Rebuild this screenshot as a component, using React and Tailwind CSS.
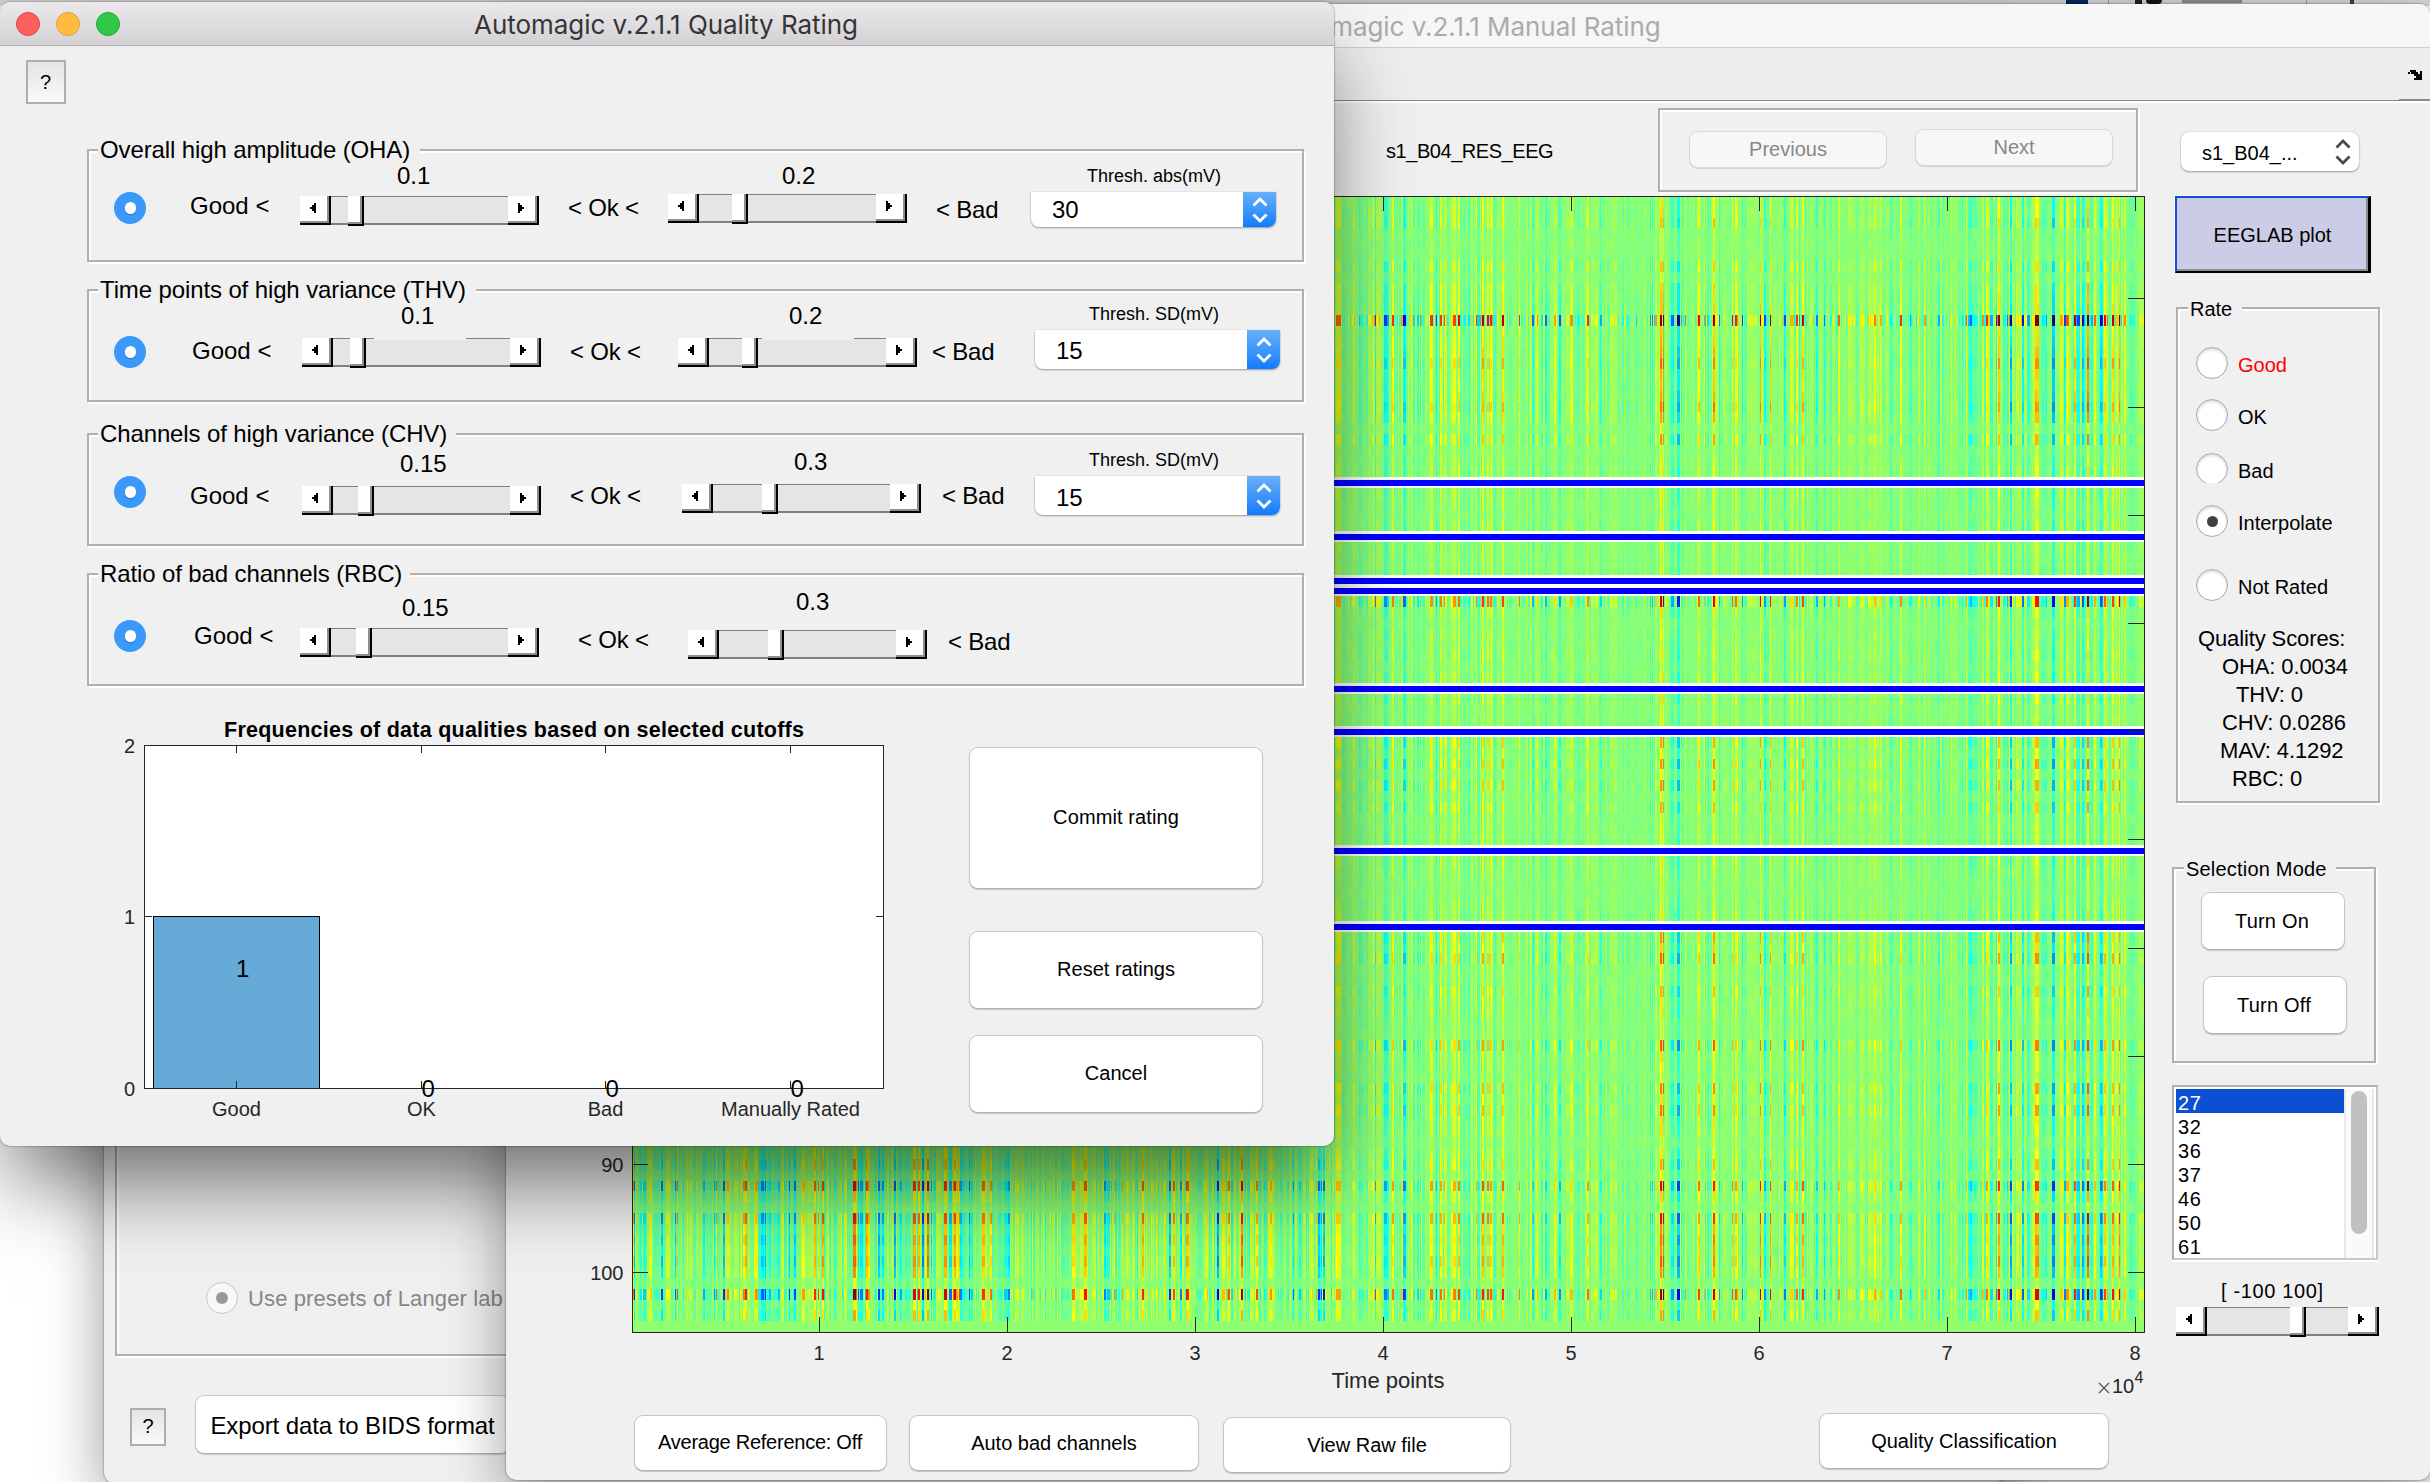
import React from "react";

/* ---------- heat map data ---------- */

const MAP = { left: 633, right: 2144, top: 196, bottom: 1332 };
const ROWS = 105;
const ROW_H = (MAP.bottom - MAP.top) / ROWS;

// Relative signal strength of each channel.
const STRENGTH = [
  0.25, 0.25, 0.34, 0.08, 0.07, 0.06, 0.32, 0.1, 0.3, 0.3, 0.34, 1.25, 0.32, 0.34, 0.4, 0.52, 0.36, 0.34, 0.4, 0.52,
  0.38, 0.1, 0.42, 0.08, 0.16, 0.22, 0, 0.2, 0.14, 0.07, 0.2, 0, 0.14, 0.1, 0.12, 0, 0, 0.9, 0.22, 0.08,
  0.15, 0.14, 0.22, 0.1, 0.22, 0, 0.22, 0.08, 0.12, 0, 0.42, 0.18, 0.45, 0.16, 0.45, 0.12, 0.34, 0.12, 0.14, 0.16,
  0, 0.2, 0.14, 0.07, 0.07, 0.12, 0.2, 0, 0.42, 0.3, 0.52, 0.15, 0.13, 0.36, 0.2, 0.2, 0.1, 0.1, 0.58, 0.22,
  0.18, 0.12, 0.48, 0.26, 0.48, 0.26, 0.24, 0.1, 0.22, 0.4, 0.16, 0.82, 0.3, 0.1, 0.76, 0.4, 0.52, 0.42, 0.55, 0.42,
  0.09, 1, 0.22, 0.38, 0,
];
const BAD = [27, 32, 36, 37, 46, 50, 61, 68];

// Bursts that stand out of the background: [position, value, width class].
const BURSTS = [
  [723, -0.8, 1], [727, 0.5, 1], [745, 0.8, 1], [853, 1.1, 2], [866, 0.8, 1], [878, -0.8, 1],
  [913, 0.9, 2], [918, 0.8, 1], [922, -1, 1], [927, 1.1, 1], [944, 0.9, 2], [954, 0.9, 1], [960, -0.6, 1], [990, 0.6, 1],
  [1008, -0.6, 1], [1084, 0.8, 2], [1104, -0.6, 1], [1142, 0.8, 1], [1169, -0.8, 1], [1173, 0.7, 1], [1180, -0.6, 1], [1217, -1, 1],
  [1228, 0.7, 1], [1241, 1.1, 1], [1318, -0.8, 1], [1323, -0.8, 1], [1338, 0.5, 2], [1392, 0.6, 1], [1430, 0.6, 2], [1440, 0.6, 1],
  [1458, 0.7, 1], [1482, 0.8, 1], [1487, 0.7, 1], [1502, 0.8, 1], [1532, -0.5, 1], [1545, -0.5, 1], [1587, 0.6, 1], [1600, -0.4, 1],
  [1660, 1.1, 1], [1663, 1.2, 0], [1677, -0.9, 2], [1698, 0.7, 1], [1713, 1, 1], [1732, 0.7, 0], [1742, -0.6, 0], [1760, 1, 0],
  [1764, -0.6, 1], [1770, 0.9, 0], [1784, -0.6, 1], [1796, 0.6, 1], [1802, 0.8, 1], [1816, -0.5, 1], [1838, 0.5, 1], [1900, 0.6, 1],
  [1938, -0.4, 1], [1970, -0.5, 1], [1986, 0.6, 1], [1998, 0.9, 1], [2010, -0.9, 1], [2022, -0.7, 1], [2037, 0.9, 1],
  [2052, -1, 2], [2064, -0.6, 1], [2074, 0.8, 1], [2082, -0.8, 1], [2087, 1.2, 1], [2094, 0.5, 1], [2100, -0.8, 1], [2104, 0.7, 1],
  [2112, 0.8, 1], [2119, 1, 0], [2124, 0.4, 1],
];

function random(seed) {
  let s = seed;
  return () => {
    s = (s + 0x6d2b79f5) | 0;
    let t = Math.imul(s ^ (s >>> 15), 1 | s);
    t = (t + Math.imul(t ^ (t >>> 7), 61 | t)) ^ t;
    return ((t ^ (t >>> 14)) >>> 0) / 4294967296;
  };
}

function envelope(x) {
  if (x < 700) return 0.9;
  if (x < 970) return 1;
  if (x < 1080) return 0.75;
  if (x < 1340) return 0.85;
  if (x < 1560) return 0.8;
  if (x < 1640) return 0.6;
  if (x < 1820) return 0.75;
  if (x < 1960) return 0.55;
  if (x < 2128) return 0.85;
  return 0.4;
}

const LEVELS = 65;

function jet(v) {
  const t = (v + 1) / 2;
  const c = (o) => Math.round(255 * Math.max(0, Math.min(1, 1.5 - Math.abs(4 * t - o))));
  return `rgb(${c(3)},${c(2)},${c(1)})`;
}

function buildStripes(rnd) {
  const stripes = [];
  let x = MAP.left;
  let b = 0;
  while (x < MAP.right) {
    while (b < BURSTS.length && BURSTS[b][0] < x) b++;
    const next = b < BURSTS.length ? BURSTS[b][0] : MAP.right;
    if (next === x && b < BURSTS.length) {
      const w = BURSTS[b][2] + 1;
      stripes.push({ x, w, v: BURSTS[b][1] * 0.95 });
      x += w;
      b++;
      continue;
    }
    const w = Math.min(1 + Math.floor(rnd() * rnd() * 3.6), next - x);
    const g = rnd() + rnd() + rnd() - 1.5;
    stripes.push({ x, w, v: g * (0.46 + 0.2 * Math.abs(g)) * envelope(x) });
    x += w;
  }
  return stripes;
}

function buildHeatmap() {
  const rnd = random(20211);
  const stripes = buildStripes(rnd);
  const paths = Array.from({ length: LEVELS }, () => []);
  for (let r = 0; r < ROWS - 1; r++) {
    if (BAD.includes(r + 1)) continue;
    const y0 = Math.round(MAP.top + r * ROW_H);
    const h = Math.round(MAP.top + (r + 1) * ROW_H) - y0;
    const a = STRENGTH[r] < 0.6 ? 0.07 + STRENGTH[r] * 0.85 : STRENGTH[r] * 0.9;
    let start = MAP.left;
    let prev = -1;
    for (let i = 0; i <= stripes.length; i++) {
      const s = stripes[i];
      let level = -2;
      if (s) {
        const v = Math.max(-1, Math.min(1, s.v * a + (rnd() - 0.5) * 0.04 + 0.015));
        level = Math.round(((v + 1) / 2) * (LEVELS - 1));
      }
      if (level !== prev) {
        const end = s ? s.x : MAP.right;
        if (prev >= 0) paths[prev].push(`M${start} ${y0}h${end - start}v${h}h${start - end}z`);
        prev = level;
        start = end;
      }
    }
  }
  return paths.map((p, i) => ({ d: p.join(""), fill: jet((i / (LEVELS - 1)) * 2 - 1) }));
}

const HEAT = buildHeatmap();
const X_TICKS = [1, 2, 3, 4, 5, 6, 7, 8].map((n) => ({ n, x: 819 + (n - 1) * 188 }));
const Y_TICKS = [10, 20, 30, 40, 50, 60, 70, 80, 90, 100].map((n) => ({ n, y: 298.3 + (n - 10) * 10.82 }));

function Heatmap() {
  return (
    <svg width="1650" height="1204" viewBox="506 196 1650 1204" className="block shrink-0 font-['Liberation_Sans',sans-serif]">
      <g shapeRendering="crispEdges">
        <rect x="633" y="196" width="1511" height="1136" fill="#8fff70" />
        {HEAT.map((p, i) => (p.d ? <path key={i} d={p.d} fill={p.fill} /> : null))}
        {BAD.map((n) => {
          const y = Math.round(MAP.top + (n - 1) * ROW_H);
          return (
            <g key={n}>
              <rect x="633" y={y} width="1511" height="11" fill="#fff" />
              <rect x="633" y={y + 2.500} width="1511" height="6" fill="#0000ff" />
            </g>
          );
        })}
        <rect x="632" y="196" width="1512" height="1136" fill="none" stroke="#262626" strokeWidth="1" />
        {X_TICKS.map((t) => (
          <path key={t.n} d={`M${t.x} 196v15M${t.x} 1317v15`} stroke="#262626" />
        ))}
        {Y_TICKS.map((t) => (
          <path key={t.n} d={`M633 ${Math.round(t.y)}h15M2128 ${Math.round(t.y)}h16`} stroke="#262626" />
        ))}
      </g>
      <g fill="#262626" fontSize="20" textAnchor="middle">
        {X_TICKS.map((t) => (
          <text key={t.n} x={t.x} y="1360">{t.n}</text>
        ))}
      </g>
      <g fill="#262626" fontSize="20" textAnchor="end">
        <text x="623.500" y="1172">90</text>
        <text x="623.500" y="1280">100</text>
      </g>
      <text x="1388" y="1388" fontSize="22" fill="#262626" textAnchor="middle">Time points</text>
      <path d="M2099 1383l10 10M2109 1383l-10 10" stroke="#555" strokeWidth="1.2" />
      <text x="2112" y="1393" fontSize="20" fill="#262626">10</text>
      <text x="2134.500" y="1383" fontSize="16" fill="#262626">4</text>
    </svg>
  );
}

/* ---------- widgets ---------- */

function PushButton({ className, children, disabled }) {
  const look = disabled
    ? "bg-[#f7f7f7] border-[#d9d9d9] text-[#888888] shadow-[0_1px_1px_#d2d2d2]"
    : "bg-white border-[#c6c6c6] border-b-[#b2b2b2] text-black shadow-[0_1px_1px_#c4c4c4]";
  return (
    <button className={`flex shrink-0 items-center justify-center rounded-[9px] border text-[20px] leading-none whitespace-nowrap ${look} ${className}`}>
      {children}
    </button>
  );
}

function HelpButton({ className }) {
  return (
    <button className={`flex shrink-0 items-center justify-center border-2 border-[#aeaeae] bg-gradient-to-b from-[#e4e4e4] to-[#fafafa] text-[20px] leading-none ${className}`}>
      ?
    </button>
  );
}

function Arrow({ right }) {
  return (
    <svg width="6" height="10" viewBox="0 0 6 10" className={right ? "-scale-x-100" : ""} shapeRendering="crispEdges">
      <path d="M4 0h2v10h-2v-2h-2v-2h-2v-2h2v-2h2z" fill="#000" />
    </svg>
  );
}

function Slider({ width, thumb, gap, className = "" }) {
  const key = "box-border bg-white border-r-2 border-b-2 border-black shadow-[inset_-2px_-2px_0_#8e8e8e]";
  return (
    <div className={`flex h-[29px] shrink-0 ${width} ${className}`}>
      <div className={`flex w-[31px] items-center justify-center pr-1 pb-1 ${key}`}><Arrow /></div>
      <div className="relative flex flex-1 border-t border-b-2 border-[#808080] bg-[#e5e5e5]">
        {gap && <div className={`absolute -top-px h-[2px] bg-[#f0f0f0] ${gap}`} />}
        <div className={`relative -mt-px h-[30px] w-4 ${thumb} ${key}`} />
      </div>
      <div className={`flex w-[31px] items-center justify-center pr-1 pb-1 ${key}`}><Arrow right /></div>
    </div>
  );
}

function Etched({ className, children }) {
  return (
    <div className={`shrink-0 border-2 border-[#b0b0b0] shadow-[2px_2px_0_#fff,inset_2px_2px_0_#fff] ${className}`}>{children}</div>
  );
}

function BlueRadio({ className }) {
  return (
    <div className={`w-8 shrink-0 ${className}`}>
      <div className="flex h-8 w-8 items-center justify-center rounded-full bg-[#3b99fc]">
        <div className="h-3 w-[11px] rounded-full bg-white shadow-[0_1px_1px_#2576cf]" />
      </div>
    </div>
  );
}

function Chevrons({ stroke, className }) {
  return (
    <svg width="16" height="26" viewBox="0 0 16 26" fill="none" stroke={stroke} strokeWidth="2.800" className={className}>
      <path d="M1.500 8.500L8 2l6.500 6.500M1.500 17.500L8 24l6.500-6.500" />
    </svg>
  );
}

function BlueSelect({ className, value }) {
  return (
    <div className={`flex w-[245px] shrink-0 items-stretch rounded-b-[8px] bg-white shadow-[0_1px_2px_#9a9a9a,0_0_1px_#aaaaaa] ${className}`}>
      <div className="flex flex-1 items-center pt-px pl-[21px] text-[24px] leading-none">{value}</div>
      <div className="flex w-[33px] items-center justify-center rounded-br-[8px] bg-gradient-to-b from-[#66aff9] to-[#0a7bff]">
        <Chevrons stroke="#fff" />
      </div>
    </div>
  );
}

/* ---------- quality rating window ---------- */

function RatingGroup({ className, title, titleWidth, radio, good, low, ok, high, bad, thresh }) {
  return (
    <Etched className={`ml-[87px] w-[1217px] ${className}`}>
      <div className={`relative -mt-[13px] ml-[9px] h-6 bg-[#f0f0f0] pl-0.5 text-[24px] leading-none tracking-[-0.12px] whitespace-nowrap ${titleWidth}`}>
        {title}
      </div>
      <div className="flex items-start text-[24px] leading-none whitespace-nowrap">
        <BlueRadio className={`ml-[25px] ${radio}`} />
        <div className={`ml-[44px] w-[110px] shrink-0 ${good}`}>Good &lt;</div>
        <div className={`w-[268px] shrink-0 ${low.top}`}>
          <div className={low.valueLeft}>{low.value}</div>
          <Slider width="w-[239px]" thumb={low.thumb} className={low.slider} gap={low.gap} />
        </div>
        <div className={`w-[100px] shrink-0 tracking-[-0.2px] ${ok}`}>&lt; Ok &lt;</div>
        <div className={`w-[264px] shrink-0 ${high.top}`}>
          <div className={high.valueLeft}>{high.value}</div>
          <Slider width="w-[239px]" thumb={high.thumb} className={high.slider} gap={high.gap} />
        </div>
        <div className={`w-[98px] shrink-0 tracking-[-0.2px] ${bad}`}>&lt; Bad</div>
        {thresh && (
          <div className={`shrink-0 ${thresh.top}`}>
            <div className={`text-[18px] leading-none ${thresh.labelLeft}`}>{thresh.label}</div>
            <BlueSelect className={thresh.select} value={thresh.value} />
          </div>
        )}
      </div>
    </Etched>
  );
}

const BARS = [
  { x: 236.5, label: "Good" },
  { x: 421.5, label: "OK", zero: true },
  { x: 605.5, label: "Bad", zero: true },
  { x: 790.5, label: "Manually Rated", zero: true },
];

function FrequencyChart() {
  return (
    <svg width="930" height="444" viewBox="0 686 930 444" className="block shrink-0 font-['Liberation_Sans',sans-serif]">
      <text x="514" y="737" fontSize="21.500" fontWeight="bold" textAnchor="middle" textLength="580">
        Frequencies of data qualities based on selected cutoffs
      </text>
      <rect x="144.500" y="745.500" width="739" height="343" fill="#fff" />
      <rect x="153.500" y="916.500" width="166" height="172" fill="#66aad7" stroke="#000" />
      <rect x="144.500" y="745.500" width="739" height="343" fill="none" stroke="#262626" />
      <path d="M145 916.500h7M876 916.500h7" stroke="#262626" />
      {BARS.map((b) => (
        <path key={b.label} d={`M${b.x} 746v7M${b.x} 1081v7`} stroke="#262626" />
      ))}
      <text x="236" y="977" fontSize="24">1</text>
      {BARS.map((b) => (b.zero ? <text key={b.label} x={b.x} y="1097" fontSize="24">0</text> : null))}
      <g fontSize="20" fill="#262626" textAnchor="middle">
        {BARS.map((b) => <text key={b.label} x={b.x} y="1116">{b.label}</text>)}
      </g>
      <g fontSize="20" fill="#262626" textAnchor="end">
        <text x="135" y="753">2</text>
        <text x="135" y="924">1</text>
        <text x="135" y="1096">0</text>
      </g>
    </svg>
  );
}

function QualityWindow() {
  return (
    <div className="absolute top-[2px] left-0 h-[1144px] w-[1334px] rounded-[10px] bg-[#f0f0f0] shadow-[0_0_2px_rgba(0,0,0,0.6),0_45px_80px_-10px_rgba(0,0,0,0.55)]">
      <div className="relative flex h-11 items-center justify-center rounded-t-[10px] border-b border-[#b1afb2] bg-gradient-to-b from-[#ebe9ec] to-[#d3d1d4]">
        <div className="absolute top-[10px] left-4 flex gap-4">
          <div className="h-6 w-6 rounded-full border border-[#e0443e] bg-[#fc605c]" />
          <div className="h-6 w-6 rounded-full border border-[#dea136] bg-[#fdbc40]" />
          <div className="h-6 w-6 rounded-full border border-[#1fa933] bg-[#33c748]" />
        </div>
        <div className="pt-[2px] pr-[2px] font-[Inter,sans-serif] text-[26px] leading-none tracking-[-0.05px] text-[#363437]">Automagic v.2.1.1 Quality Rating</div>
      </div>
      <HelpButton className="mt-[14px] ml-[26px] h-11 w-10 pr-px pb-px" />
      <RatingGroup
        className="mt-[45px] h-[113px]"
        title="Overall high amplitude (OHA)"
        titleWidth="w-[322px]"
        radio="pt-[30px]"
        good="pt-[32px]"
        low={{ top: "pt-[2px]", value: "0.1", valueLeft: "pl-[97px]", slider: "mt-[8px]", thumb: "ml-[17px]" }}
        ok="pt-[34px]"
        high={{ top: "pt-[2px]", value: "0.2", valueLeft: "pl-[114px]", slider: "mt-[6px]", thumb: "ml-[33px]" }}
        bad="pt-[36px] pl-[4px]"
        thresh={{ top: "pt-[5px]", label: "Thresh. abs(mV)", labelLeft: "pl-[57px]", select: "mt-[7px] ml-px h-[35px]", value: "30" }}
      />
      <RatingGroup
        className="mt-[27px] h-[113px]"
        title="Time points of high variance (THV)"
        titleWidth="w-[378px]"
        radio="pt-[34px]"
        good="pt-[37px] pl-[2px]"
        low={{ top: "pt-[2px]", value: "0.1", valueLeft: "pl-[101px]", slider: "mt-[10px] ml-[2px]", thumb: "ml-[17px]", gap: "left-[41px] w-[92px]" }}
        ok="pt-[38px] pl-[2px]"
        high={{ top: "pt-[2px]", value: "0.2", valueLeft: "pl-[121px]", slider: "mt-[10px] ml-[10px]", thumb: "ml-[33px]", gap: "left-[53px] w-[92px]" }}
        bad="pt-[38px]"
        thresh={{ top: "pt-[3px]", label: "Thresh. SD(mV)", labelLeft: "pl-[59px]", select: "mt-[7px] ml-[5px] h-[39px]", value: <span className="pt-px">15</span> }}
      />
      <RatingGroup
        className="mt-[31px] h-[113px]"
        title="Channels of high variance (CHV)"
        titleWidth="w-[358px]"
        radio="pt-[30px]"
        good="pt-[38px]"
        low={{ top: "pt-[6px]", value: "0.15", valueLeft: "pl-[100px]", slider: "mt-[10px] ml-[2px]", thumb: "ml-[25px]" }}
        ok="pt-[38px] pl-[2px]"
        high={{ top: "pt-[4px]", value: "0.3", valueLeft: "pl-[126px]", slider: "mt-[10px] ml-[14px]", thumb: "ml-[49px]" }}
        bad="pt-[38px] pl-[10px]"
        thresh={{ top: "pt-[5px]", label: "Thresh. SD(mV)", labelLeft: "pl-[59px]", select: "mt-[7px] ml-[5px] h-[39px]", value: <span className="pt-[3px]">15</span> }}
      />
      <RatingGroup
        className="mt-[27px] h-[113px]"
        title="Ratio of bad channels (RBC)"
        titleWidth="w-[312px]"
        radio="pt-[34px]"
        good="pt-[38px] pl-[4px]"
        low={{ top: "pt-[10px]", value: "0.15", valueLeft: "pl-[102px]", slider: "mt-[8px]", thumb: "ml-[25px]" }}
        ok="pt-[42px] pl-[10px]"
        high={{ top: "pt-[4px]", value: "0.3", valueLeft: "pl-[128px]", slider: "mt-[16px] ml-[20px]", thumb: "ml-[49px]" }}
        bad="pt-[44px] pl-[16px]"
      />
      <div className="flex items-start">
        <FrequencyChart />
        <div className="ml-[39px] flex w-[294px] flex-col">
          <PushButton className="mt-[61px] h-[142px] pb-[2px] tracking-[0.1px]">Commit rating</PushButton>
          <PushButton className="mt-[42px] h-[78px] pb-[2px]">Reset ratings</PushButton>
          <PushButton className="mt-[26px] h-[78px] pb-[2px]">Cancel</PushButton>
        </div>
      </div>
    </div>
  );
}

/* ---------- manual rating window ---------- */

function Radio({ className, label, checked, clipped, labelClass = "" }) {
  return (
    <div className={`flex items-center gap-[10px] ${className}`}>
      <div className={`w-8 overflow-hidden ${clipped ? "h-[30px] self-start" : "h-8"}`}>
        <div className="flex h-8 w-8 items-center justify-center rounded-full border border-[#a8a8a8] bg-white shadow-[inset_0_2px_3px_#dcdcdc]">
          {checked && <div className="h-[11px] w-[11px] rounded-full bg-[#404040]" />}
        </div>
      </div>
      <div className={`pt-[3px] text-[20px] leading-none ${labelClass}`}>{label}</div>
    </div>
  );
}

const CHANNELS = [27, 32, 36, 37, 46, 50, 61];

function SidePanel() {
  return (
    <div className="flex flex-1 flex-col items-start">
      <div className="mt-[29px] ml-[25px] flex h-[39px] w-[178px] items-center justify-between rounded-[8px] bg-white pr-[8px] pl-[21px] text-[20px] leading-none shadow-[0_1px_2px_#9a9a9a,0_0_1px_#aaaaaa]">
        <span className="pt-[2px]">s1_B04_...</span>
        <Chevrons stroke="#4a4a4a" />
      </div>
      <div className="mt-[24px] ml-[18px] border border-r-0 border-b-0 border-white">
        <button className="flex h-[77px] w-[196px] items-center justify-center border-t-2 border-r-[3px] border-b-2 border-l-2 border-t-[#0d50d3] border-r-black border-b-black border-l-[#0d50d3] bg-[#cccce6] pt-px text-[20px] leading-none shadow-[inset_-2px_-2px_0_#8e8e8e]">
          EEGLAB plot
        </button>
      </div>
      <Etched className="mt-[34px] ml-[20px] h-[496px] w-[204px]">
        <div className="relative -mt-[10px] ml-[10px] h-5 w-[54px] bg-[#f0f0f0] pl-[2px] text-[20px] leading-none">Rate</div>
        <Radio className="mt-[28px] ml-[18px]" label="Good" labelClass="text-[#ff0000]" />
        <Radio className="mt-[20px] ml-[18px]" label="OK" />
        <Radio className="mt-[22px] ml-[18px] h-8" label="Bad" clipped />
        <Radio className="mt-[20px] ml-[18px]" label="Interpolate" checked />
        <Radio className="mt-[32px] ml-[18px]" label="Not Rated" />
        <div className="mt-[24px] ml-[20px] flex flex-col text-[22px] leading-[28px] tracking-[-0.12px] whitespace-nowrap">
          <div>Quality Scores:</div>
          <div className="pl-[24px]">OHA: 0.0034</div>
          <div className="pl-[38px]">THV: 0</div>
          <div className="pl-[24px]">CHV: 0.0286</div>
          <div className="pl-[22px]">MAV: 4.1292</div>
          <div className="pl-[34px]">RBC: 0</div>
        </div>
      </Etched>
      <Etched className="mt-[64px] ml-[16px] h-[196px] w-[204px]">
        <div className="relative -mt-[10px] ml-[10px] h-5 w-[152px] bg-[#f0f0f0] pl-[2px] text-[20px] leading-none tracking-[0.2px]">Selection Mode</div>
        <PushButton className="mt-[13px] ml-[27px] h-[58px] w-[144px] pr-[2px] tracking-[0.2px]">Turn On</PushButton>
        <PushButton className="mt-[26px] ml-[29px] h-[58px] w-[144px] pr-[2px] tracking-[0.2px]">Turn Off</PushButton>
      </Etched>
      <div className="mt-[22px] ml-[16px] flex h-[175px] w-[206px] overflow-hidden border-2 border-[#b0b0b0] border-r-[#c8c8c8] border-b-[#c8c8c8] bg-white pt-[2px] pl-[2px] shadow-[0_2px_0_#fff]">
        <div className="flex w-[168px] flex-col text-[20px] leading-[24px] tracking-[0.7px]">
          {CHANNELS.map((c, i) => (
            <div key={c} className={`h-6 shrink-0 pt-[2px] pl-[2px] ${i === 0 ? "bg-[#0b50d3] text-white" : ""}`}>{c}</div>
          ))}
        </div>
        <div className="flex w-[30px] justify-center border-r-2 border-l-2 border-[#e8e8e8] bg-[#fafafa] pt-[2px]">
          <div className="h-[143px] w-4 rounded-full bg-[#c1c1c1]" />
        </div>
      </div>
      <div className="mt-[21px] ml-[65px] text-[20px] leading-none tracking-[0.65px] whitespace-pre">[ -100 100]</div>
      <Slider width="w-[203px]" thumb="ml-[83px]" className="mt-[6px] ml-[20px]" />
    </div>
  );
}

function ManualWindow() {
  return (
    <div className="absolute top-[4px] left-[506px] flex h-[1476px] w-[1924px] flex-col rounded-[10px] bg-[#f0f0f0] shadow-[0_0_2px_rgba(0,0,0,0.6),0_20px_60px_rgba(0,0,0,0.4)]">
      <div className="flex h-11 shrink-0 items-center justify-center rounded-t-[10px] border-b border-[#d0d0d0] bg-[#f6f6f6]">
        <div className="pt-[2px] pr-[2px] font-[Inter,sans-serif] text-[26px] leading-none tracking-[-0.05px] text-[#ababab]">Automagic v.2.1.1 Manual Rating</div>
      </div>
      <div className="flex h-[55px] shrink-0 flex-col items-end justify-between border-b-2 border-white bg-[#eeeeee]">
        <svg width="14" height="11" viewBox="0 0 14 11" className="mt-[21px] mr-[8px]" shapeRendering="crispEdges">
          <path d="M0 3h2v-2h6v2h2v2h2v-3h2v9h-8v-2h2v-2h-2v-2h-3v-2h-1v2h-2z" fill="#000" />
        </svg>
        <div className="flex w-full flex-col items-end">
          <div className="h-px w-[31px] bg-[#888888]" />
          <div className="h-px w-full bg-[#888888]" />
        </div>
      </div>
      <div className="flex flex-1">
        <div className="flex w-[1650px] flex-col">
          <div className="flex h-[93px] shrink-0 items-start">
            <div className="mt-[38px] ml-[880px] w-[272px] text-[20px] leading-none tracking-[-0.45px]">s1_B04_RES_EEG</div>
            <Etched className="mt-[5px] flex h-[84px] w-[480px] items-start">
              <PushButton disabled className="mt-[21px] ml-[29px] h-[37px] w-[198px] pb-[2px]">Previous</PushButton>
              <PushButton disabled className="mt-[19px] ml-[28px] h-[37px] w-[198px] pb-[2px]">Next</PushButton>
            </Etched>
          </div>
          <Heatmap />
          <div className="flex items-start">
            <PushButton className="mt-[15px] ml-[128px] h-[56px] w-[253px] pr-px pb-[3px] tracking-[-0.25px]">Average Reference: Off</PushButton>
            <PushButton className="mt-[15px] ml-[22px] h-[56px] w-[290px]">Auto bad channels</PushButton>
            <PushButton className="mt-[17px] ml-[24px] h-[56px] w-[288px]">View Raw file</PushButton>
            <PushButton className="mt-[13px] ml-[308px] h-[56px] w-[290px]">Quality Classification</PushButton>
          </div>
        </div>
        <SidePanel />
      </div>
    </div>
  );
}

/* ---------- main window, mostly covered ---------- */

function MainWindow() {
  return (
    <div className="absolute top-[40px] left-[104px] flex h-[1443px] w-[1900px] flex-col rounded-[10px] bg-[#f0f0f0] shadow-[0_0_2px_rgba(0,0,0,0.6),0_20px_60px_rgba(0,0,0,0.4)]">
      <Etched className="mt-[60px] ml-[11px] flex h-[1256px] w-[1800px] flex-col justify-end">
        <div className="mb-[40px] ml-[89px] flex items-center gap-[10px]">
          <div className="flex h-8 w-8 items-center justify-center rounded-full border border-[#c8c8c8] bg-[#f8f8f8]">
            <div className="h-3 w-3 rounded-full bg-[#999999]" />
          </div>
          <div className="pt-[2px] text-[22px] leading-none tracking-[0.12px] text-[#878787]">Use presets of Langer lab</div>
        </div>
      </Etched>
      <div className="flex items-start">
        <HelpButton className="mt-[52px] ml-[26px] h-[38px] w-9 pb-[2px]" />
        <PushButton className="mt-[39px] ml-[29px] h-[59px] w-[315px] pt-[2px] text-[24px] tracking-[-0.1px]">Export data to BIDS format</PushButton>
      </div>
    </div>
  );
}

export default function App() {
  return (
    <div className="relative h-[1482px] w-[2430px] overflow-hidden bg-white font-['Liberation_Sans',sans-serif] text-black">
      <div className="flex h-[6px] bg-[#cfcfcd]">
        <div className="ml-[2066px] h-full w-[22px] bg-[#03265a]" />
        <div className="flex h-full flex-1 bg-[#d2d4d9]">
          <div className="ml-[20px] h-full w-px bg-[#9a9a9a]" />
          <div className="ml-[26px] h-[4px] w-[7px] bg-[#222]" />
          <div className="ml-[4px] h-[4px] w-[16px] rounded-b-full bg-[#1a1010]" />
          <div className="ml-[20px] h-[3px] w-[60px] bg-[#8a8c90]" />
          <div className="ml-[64px] h-full w-px bg-[#9a9a9a]" />
          <div className="ml-[43px] h-full w-[4px] bg-[#3c3c44]" />
        </div>
      </div>
      <MainWindow />
      <ManualWindow />
      <QualityWindow />
    </div>
  );
}
